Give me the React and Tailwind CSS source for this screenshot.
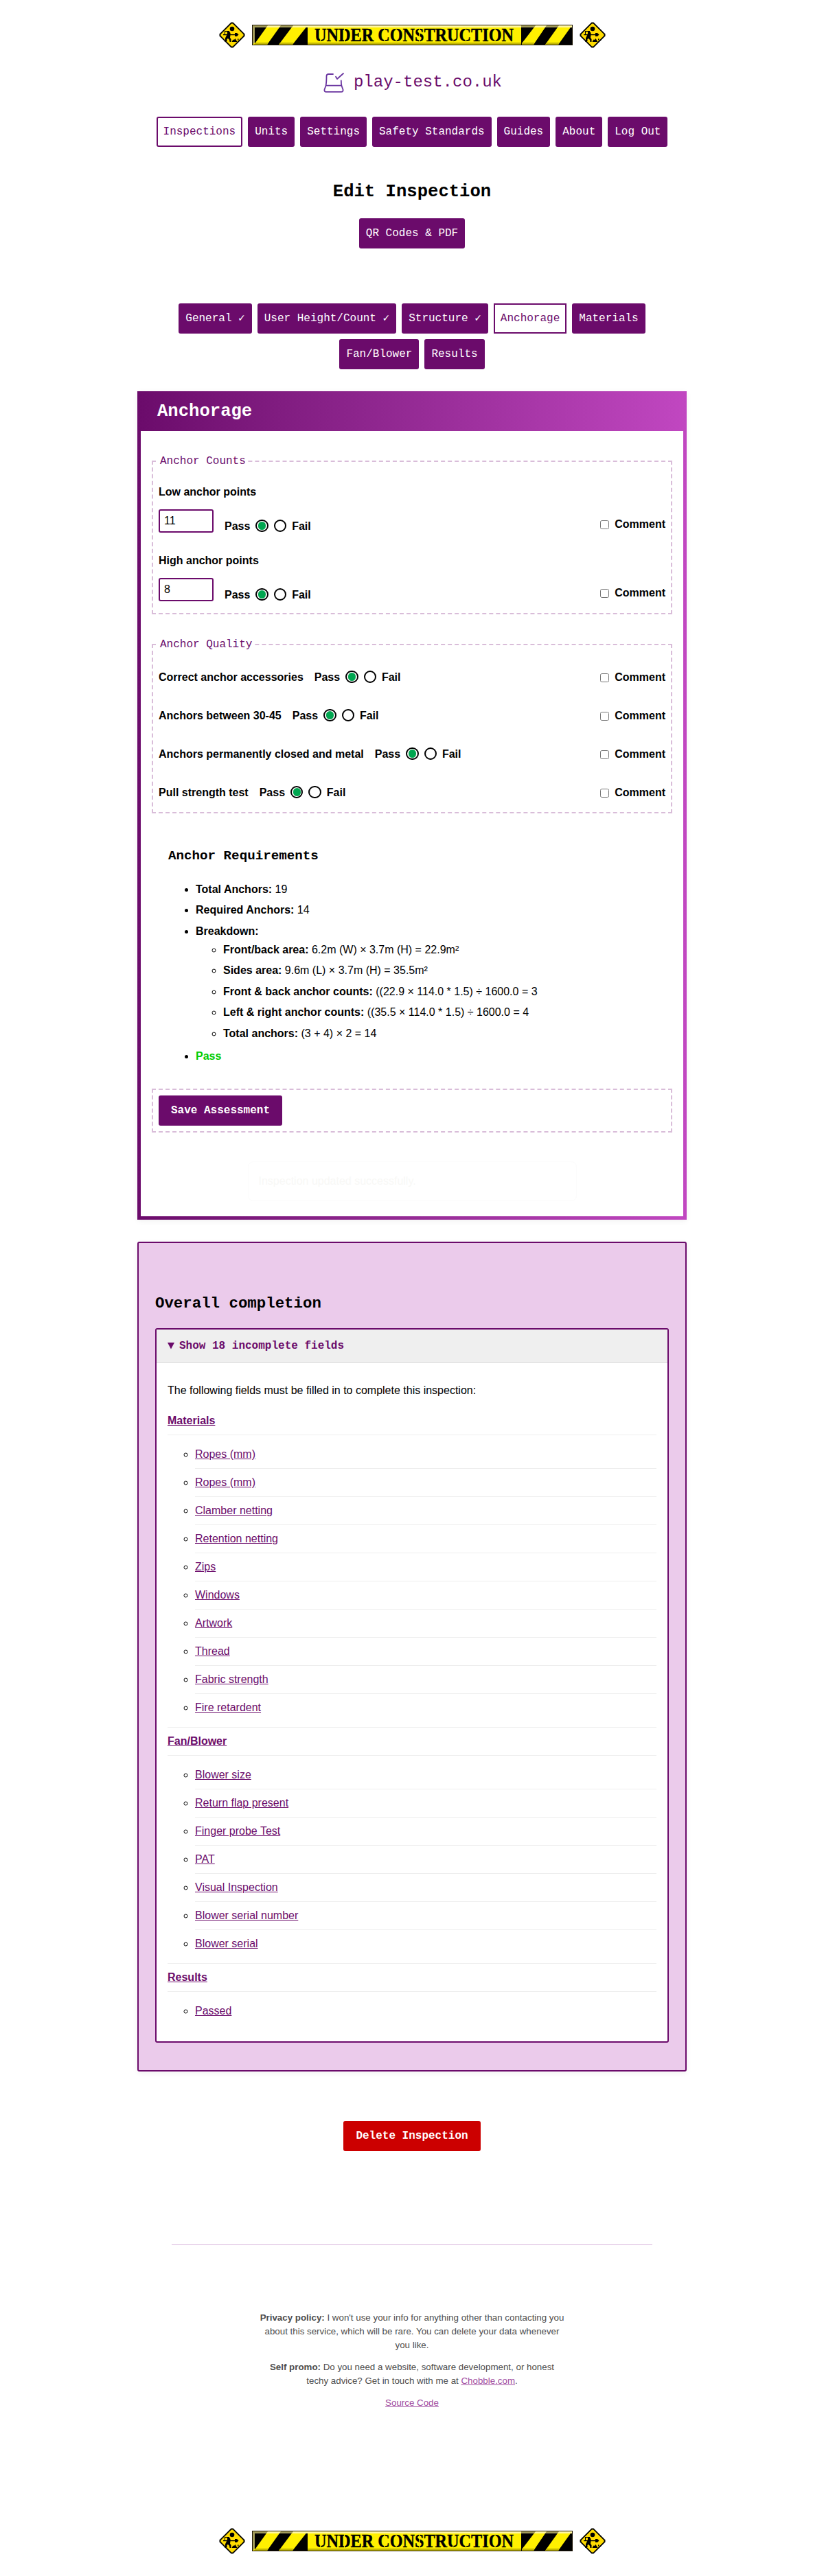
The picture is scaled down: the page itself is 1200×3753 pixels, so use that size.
import React from "react";

const mono = "font-['Liberation_Mono','DejaVu_Sans_Mono',monospace]";

function Sign() {
  return (
    <svg width="38" height="38" viewBox="0 0 38 38" className="shrink-0">
      <path d="M17.500 0.500h3L37.500 17.500v3L20.500 37.500h-3L0.500 20.500v-3z" fill="#000" />
      <path d="M18 2.500h2L35.500 18v2L20 35.500h-2L2.500 20v-2z" fill="#ffdc00" />
      <circle cx="19" cy="10" r="3.300" fill="#000" />
      <path d="M10 14h5l1.500 2v3l-0.500 4l1.500 2v4h-2l-0.500-3l-2-2l-1.500 1v3l-1.500 1h-2l1-1.500v-4l2-4l1-3v-2.500h-2z" fill="#000" />
      <path d="M8 13h7v1.200H9V18H8zM6 18h17v1.200H6z" fill="#000" />
      <path d="M23 16h3l2.500 2.500L26 21h-3z" fill="#000" />
      <path d="M18.500 29l2-3.500l1.500 0.500l1.500-2l3 5zM27 24.500h1.500v2H27zM29 26h2v-2h1.200l-2.200 4z" fill="#000" />
    </svg>
  );
}

const stencilCuts = [99.7, 134.5, 193, 210, 243.700, 292.800, 311.500, 354];

function Banner() {
  return (
    <div className="flex h-[38px] items-center justify-center gap-[10px]">
      <Sign />
      <svg width="467" height="30" viewBox="0 0 467 30" className="shrink-0">
        <rect width="467" height="30" fill="#fff000" />
        <rect x="4" y="1" width="77" height="28" fill="#000" />
        <rect x="392" y="1" width="74" height="28" fill="#000" />
        <path d="M3 29L23 1h19L22 29zM39 29L60 1h21L59 29z" fill="#fff000" />
        <path d="M393 29v-2L413 1h16L410 29zM427 29L447 1h19L446 29z" fill="#fff000" />
        <rect x="1" y="1" width="465" height="3" fill="#fff6a0" />
        <path d="M1 1h22l-2 3H4v22l-3 3zM42 1h18l-2 3H40zM392 1h21l-2 3h-19zM429 1h18l-2 3h-18z" fill="#a39c5a" />
        <path d="M81 26h311v3H81zM5 26h19l-2 3H3zM41 26h20l-2 3H39zM393 26h19l-2 3h-17zM429 26h19l-2 3h-19z" fill="#c4b800" />
        <rect x="0.5" y="0.5" width="466" height="29" fill="none" stroke="#1c1405" />
        <text
          x="91"
          y="24"
          fontFamily="'Liberation Serif', serif"
          fontWeight="700"
          fontSize="28"
          textLength="290"
          lengthAdjust="spacingAndGlyphs"
          stroke="#000"
          strokeWidth="0.400"
        >
          UNDER CONSTRUCTION
        </text>
        {stencilCuts.map((x) => (
          <rect key={x} x={x - 0.6} y="4" width="1.2" height="21" fill="#fff000" />
        ))}
      </svg>
      <Sign />
    </div>
  );
}

function NavButton({ label, active, square }) {
  const tone = active ? "bg-white text-[#6b0b6b]" : "bg-[#6b0b6b] text-white";
  const shape = square ? "" : "rounded-[3px]";
  return (
    <a className={`${tone} ${shape} ${mono} block h-11 whitespace-nowrap border-2 border-[#6b0b6b] p-2 text-base leading-6`}>
      {label}
    </a>
  );
}

function PassFail() {
  return (
    <div className="flex h-6 items-center gap-2 font-bold">
      <span>Pass</span>
      <span className="-mt-[2px] flex size-[18.4px] items-center justify-center rounded-full border-2 border-black bg-white">
        <span className="size-[11.4px] rounded-full bg-[#00a650]" />
      </span>
      <span className="-mt-[2px] size-[18.4px] rounded-full border-2 border-black bg-white" />
      <span>Fail</span>
    </div>
  );
}

function Comment() {
  return (
    <label className="ml-auto flex h-6 items-center gap-2 font-bold">
      <span className="mt-[1px] size-[13px] rounded-[2.5px] border border-[#767676] bg-white" />
      Comment
    </label>
  );
}

function CountGroup({ label, value }) {
  return (
    <div className="h-[80px]">
      <div className="font-bold">{label}</div>
      <div className="mt-[13px] flex">
        <div className="h-[34.4px] w-20 rounded-[3px] border-2 border-[#6b0b6b] bg-white px-1.5 text-base leading-[30px]">
          {value}
        </div>
        <div className="ml-4 mt-[13px]">
          <PassFail />
        </div>
        <div className="ml-auto mt-[10px]">
          <Comment />
        </div>
      </div>
    </div>
  );
}

const fieldset = "border-2 border-dashed border-[#d9bdd9] p-2";
const legend = `${mono} px-0.5 text-base leading-6 text-[#6b0b6b]`;

const quality = [
  "Correct anchor accessories",
  "Anchors between 30-45",
  "Anchors permanently closed and metal",
  "Pull strength test",
];

const breakdown = [
  ["Front/back area:", "6.2m (W) × 3.7m (H) = 22.9m²"],
  ["Sides area:", "9.6m (L) × 3.7m (H) = 35.5m²"],
  ["Front & back anchor counts:", "((22.9 × 114.0 * 1.5) ÷ 1600.0 = 3"],
  ["Left & right anchor counts:", "((35.5 × 114.0 * 1.5) ÷ 1600.0 = 4"],
  ["Total anchors:", "(3 + 4) × 2 = 14"],
];

const sections = [
  {
    name: "Materials",
    fields: [
      "Ropes (mm)",
      "Ropes (mm)",
      "Clamber netting",
      "Retention netting",
      "Zips",
      "Windows",
      "Artwork",
      "Thread",
      "Fabric strength",
      "Fire retardent",
    ],
  },
  {
    name: "Fan/Blower",
    fields: [
      "Blower size",
      "Return flap present",
      "Finger probe Test",
      "PAT",
      "Visual Inspection",
      "Blower serial number",
      "Blower serial",
    ],
  },
  { name: "Results", fields: ["Passed"] },
];

export default function App() {
  return (
    <div className="min-h-[3753px] bg-white py-8 font-['Liberation_Sans',Arial,sans-serif] text-base leading-6 text-black">
      <Banner />

      <div className="mt-8 flex h-9 items-center justify-center">
        <svg width="46" height="30" viewBox="0 0 46 30" fill="none" stroke="#6a35a0" strokeWidth="1.8" strokeLinecap="round" strokeLinejoin="round">
          <path d="M16 3H9.500C7 3 6.500 4 6.500 6C6.500 11 6.500 15 5.500 20M27.800 12.500C27.800 16 28 18 28.500 20M6 19.700H28M5.500 20L3.500 25.500C3 27.500 4 28.800 6 28.800H28C30 28.800 31 27.500 30.500 25.500L28.500 20" />
          <path d="M20 6.800L22 10L31 2" />
        </svg>
        <span className={`${mono} text-2xl leading-9 text-[#6b0b6b]`}>play-test.co.uk</span>
      </div>

      <nav className="mt-8 flex justify-center gap-2">
        <NavButton label="Inspections" active />
        <NavButton label="Units" />
        <NavButton label="Settings" />
        <NavButton label="Safety Standards" />
        <NavButton label="Guides" />
        <NavButton label="About" />
        <NavButton label="Log Out" />
      </nav>

      <h1 className={`${mono} mt-[50px] text-center text-[25.6px] font-bold leading-8`}>Edit Inspection</h1>

      <div className="mt-[22px] flex justify-center">
        <NavButton label="QR Codes & PDF" />
      </div>

      <nav className="mx-auto mt-20 flex w-[800px] flex-wrap justify-center gap-2">
        <NavButton label="General ✓" />
        <NavButton label="User Height/Count ✓" />
        <NavButton label="Structure ✓" />
        <NavButton label="Anchorage" active square />
        <NavButton label="Materials" />
        <NavButton label="Fan/Blower" />
        <NavButton label="Results" />
      </nav>

      <section className="mx-auto mt-8 w-[800px] bg-linear-to-r from-[#6b0b6b] to-[#c147c1] px-[5px] pb-[5px] shadow-[0_2px_8px_rgba(0,0,0,0.06)]">
        <h2 className={`${mono} h-[58px] pl-6 pt-[14px] text-[25.6px] font-bold leading-8 text-white`}>Anchorage</h2>
        <div className="h-[1144px] bg-white px-4 pt-8">
          <fieldset className={fieldset}>
            <legend className={legend}>Anchor Counts</legend>
            <div className="flex flex-col gap-5 pt-[13px]">
              <CountGroup label="Low anchor points" value="11" />
              <CountGroup label="High anchor points" value="8" />
            </div>
          </fieldset>

          <fieldset className={`${fieldset} mt-8`}>
            <legend className={legend}>Anchor Quality</legend>
            <div className="flex flex-col gap-8 pb-2 pt-4">
              {quality.map((q) => (
                <div key={q} className="flex gap-4">
                  <span className="font-bold">{q}</span>
                  <PassFail />
                  <Comment />
                </div>
              ))}
            </div>
          </fieldset>

          <div className="ml-6 mt-[50px]">
            <h3 className={`${mono} text-[19.2px] font-bold leading-6`}>Anchor Requirements</h3>
            <ul className="mt-[25px] flex list-disc flex-col gap-[6.4px] pl-10">
              <li><b>Total Anchors:</b> 19</li>
              <li><b>Required Anchors:</b> 14</li>
              <li>
                <b>Breakdown:</b>
                <ul className="my-[3.2px] flex list-[circle] flex-col gap-[6.4px] pl-10">
                  {breakdown.map(([k, v]) => (
                    <li key={k}><b>{k}</b> {v}</li>
                  ))}
                </ul>
              </li>
              <li><b className="text-[#00cc00]">Pass</b></li>
            </ul>
          </div>

          <fieldset className={`${fieldset} mt-[35px]`}>
            <button className={`${mono} block h-11 rounded-[3px] border-2 border-[#6b0b6b] bg-[#6b0b6b] px-4 text-base font-bold leading-6 text-white`}>
              Save Assessment
            </button>
          </fieldset>

          <div className="mx-auto mt-[42px] h-[58px] w-[479px] rounded-lg border border-[#fcfcfc] py-4 pl-[15px] text-[#f8f8f6]">
            Inspection updated successfully.
          </div>
        </div>
      </section>

      <section className="mx-auto mt-8 w-[800px] rounded-[3px] border-2 border-[#6b0b6b] bg-[#ebcbeb] px-6 pb-10 pt-[74px] shadow-[0_2px_8px_rgba(0,0,0,0.06)]">
        <h2 className={`${mono} text-[22.4px] font-bold leading-7`}>Overall completion</h2>
        <div className="mt-[22px] overflow-hidden rounded-[3px] border-2 border-[#6b0b6b] bg-white">
          <div className={`${mono} flex h-[49px] items-center border-b border-[#dddddd] bg-[#efefef] px-4 font-bold text-[#6b0b6b]`}>
            <svg width="17" height="10" viewBox="0 0 17 10" fill="currentColor">
              <path d="M0 0h10L5 9.500z" />
            </svg>
            Show 18 incomplete fields
          </div>
          <div className="px-4 pb-4 pt-7">
            <p className="mb-3">The following fields must be filled in to complete this inspection:</p>
            <ul>
              {sections.map((s, i) => (
                <li key={s.name} className={i < sections.length - 1 ? "border-b border-[#eeeeee]" : ""}>
                  <div className="border-b border-[#eeeeee] py-2">
                    <a className="font-bold text-[#6b0b6b] underline">{s.name}</a>
                  </div>
                  <ul className="my-2 list-[circle] pl-10">
                    {s.fields.map((f, j) => (
                      <li key={j} className={j < s.fields.length - 1 ? "border-b border-[#eeeeee] py-2" : "py-2"}>
                        <a className="text-[#6b0b6b] underline">{f}</a>
                      </li>
                    ))}
                  </ul>
                </li>
              ))}
            </ul>
          </div>
        </div>
      </section>

      <div className="mt-[72px] flex justify-center">
        <button className={`${mono} h-11 rounded-[3px] border-2 border-[#cc0000] bg-[#cc0000] px-4 text-base font-bold leading-6 text-white`}>
          Delete Inspection
        </button>
      </div>

      <footer className="mt-[136px]">
        <div className="mx-auto h-px w-[700px] bg-[#d8b4dc]" />
        <div className="mt-24 flex flex-col gap-3 text-center text-[13.333px] leading-5 text-[#4d4d4d]">
          <p>
            <b>Privacy policy:</b> I won't use your info for anything other than contacting you
            <br />
            about this service, which will be rare. You can delete your data whenever
            <br />
            you like.
          </p>
          <p>
            <b>Self promo:</b> Do you need a website, software development, or honest
            <br />
            techy advice? Get in touch with me at <a className="text-[#a04ba0] underline">Chobble.com</a>.
          </p>
          <p>
            <a className="text-[#a04ba0] underline">Source Code</a>
          </p>
        </div>
      </footer>

      <div className="mt-[172px]">
        <Banner />
      </div>
    </div>
  );
}
